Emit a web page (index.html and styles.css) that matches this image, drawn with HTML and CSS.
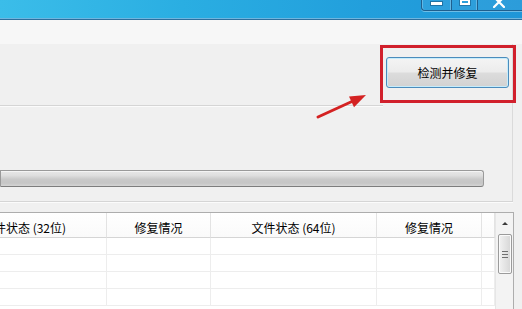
FILE: index.html
```html
<!DOCTYPE html>
<html lang="zh-CN">
<head>
<meta charset="utf-8">
<title>检测并修复</title>
<link rel="stylesheet" href="styles.css">
</head>
<body>
<div class="window">
  <div class="titlebar">
    <div class="caption-btns">
      <div class="cb cb-min"><span class="ico-min"></span></div>
      <div class="cb cb-max"><span class="ico-max"></span></div>
      <div class="cb cb-close">
        <svg class="ico-close" width="12" height="8" viewBox="0 0 12 8"><path d="M1 -3 L11 7 M11 -3 L1 7" stroke="#fff" stroke-width="2.2" stroke-linecap="square"/></svg>
      </div>
    </div>
  </div>
  <div class="toolbar"></div>
  <div class="content">
    <div class="upper">
      <div class="action-row">
        <button class="fix-btn">检测并修复</button>
      </div>
      <div class="rule rule-short"></div>
      <div class="progress-area">
        <div class="progress"></div>
      </div>
    </div>
    <div class="rule rule-long"></div>
    <div class="grid-wrap">
      <div class="grid">
        <div class="row head">
          <div class="cell">文件状态 (32位)</div>
          <div class="cell">修复情况</div>
          <div class="cell">文件状态 (64位)</div>
          <div class="cell">修复情况</div>
          <div class="cell"></div>
        </div>
        <div class="row"><div class="cell"></div><div class="cell"></div><div class="cell"></div><div class="cell"></div><div class="cell"></div></div>
        <div class="row"><div class="cell"></div><div class="cell"></div><div class="cell"></div><div class="cell"></div><div class="cell"></div></div>
        <div class="row"><div class="cell"></div><div class="cell"></div><div class="cell"></div><div class="cell"></div><div class="cell"></div></div>
        <div class="row"><div class="cell"></div><div class="cell"></div><div class="cell"></div><div class="cell"></div><div class="cell"></div></div>
      </div>
      <div class="vscroll">
        <div class="sb-up"><span class="tri"></span></div>
        <div class="sb-thumb"><span class="grip"></span><span class="grip"></span><span class="grip"></span></div>
      </div>
    </div>
  </div>

  <div class="highlight"></div>
  <svg class="arrow" width="522" height="309" viewBox="0 0 522 309">
    <line x1="318" y1="117" x2="353" y2="101" stroke="#d42222" stroke-width="3" stroke-linecap="round"/>
    <polygon points="366,95 349,96.4 354,107.2" fill="#d42222"/>
  </svg>
</div>
</body>
</html>
```
FILE: styles.css
```css
* { box-sizing: border-box; }
html, body { margin: 0; padding: 0; }
body {
  width: 522px;
  height: 309px;
  overflow: hidden;
  background: #f0f0f0;
  font-family: "Noto Sans CJK SC", "DejaVu Sans", sans-serif;
  font-size: 12px;
  color: #000;
}
.window {
  position: relative;
  width: 522px;
  height: 309px;
  overflow: hidden;
  display: flex;
  flex-direction: column;
}
.titlebar {
  height: 20px;
  flex: none;
  display: flex;
  background: linear-gradient(90deg, #3bbde9 0%, #2aaee2 35%, #229fdc 70%, #1f96d8 100%);
  border-bottom: 1px solid #2d6f9e;
  box-shadow: inset 0 -1px 0 #6fb6df;
}
.caption-btns {
  margin-left: auto;
  width: 101px;
  height: 11px;
  display: flex;
  border: 1px solid #1f5f8e;
  border-top: none;
  border-right: none;
  border-bottom-left-radius: 4px;
  box-shadow: 0 1px 0 rgba(255,255,255,0.35), inset 1px 0 0 rgba(255,255,255,0.25);
  background: rgba(255,255,255,0.06);
}
.cb {
  height: 10px;
  display: flex;
  align-items: flex-start;
  justify-content: center;
  border-right: 1px solid #1f5f8e;
  box-shadow: inset -1px 0 0 rgba(255,255,255,0.25);
}
.cb-min { width: 30px; }
.cb-max { width: 26px; }
.cb-close { flex: 1; border-right: none; box-shadow: none; }
.ico-min {
  margin-top: 2px;
  width: 11px;
  height: 3px;
  background: #fff;
  box-shadow: 0 0 0 1px rgba(20,70,110,0.5);
}
.ico-max {
  margin-top: -2px;
  width: 10px;
  height: 7px;
  border: 2px solid #fff;
  border-top-width: 3px;
  box-shadow: 0 0 0 1px rgba(20,70,110,0.45);
}
.ico-close { margin-top: 0; margin-right: 3px; }

.toolbar {
  height: 24px;
  flex: none;
  background: #f7f7f7;
}
.content {
  flex: 1;
  display: flex;
  flex-direction: column;
}
.upper {
  width: 513px;
  border-right: 1px solid #dadada;
}
.action-row {
  height: 61px;
  display: flex;
  justify-content: flex-end;
  align-items: flex-start;
  padding-top: 13px;
  padding-right: 3px;
}
.fix-btn {
  width: 123px;
  height: 31px;
  border: 1px solid #4b8cbc;
  border-radius: 3px;
  background: linear-gradient(#f4f4f4 0%, #ececec 48%, #dcdcdc 52%, #d2d2d2 100%);
  box-shadow: inset 0 0 0 1px #c6ecfb;
  font-family: "Noto Sans CJK SC", sans-serif;
  font-size: 12px;
  color: #000;
  padding: 0;
  line-height: 29px;
}
.rule {
  height: 2px;
  border-top: 1px solid #d5d5d5;
  border-bottom: 1px solid #fbfbfb;
}
.rule-short { width: 383px; }
.rule-long { width: 513px; }
.progress-area {
  height: 94px;
  padding-top: 63px;
}
.progress {
  width: 484px;
  height: 17px;
  border: 1px solid #9a9a9a;
  border-bottom-color: #7d7d7d;
  border-radius: 0 3px 3px 0;
  background: linear-gradient(#e8e8e8 0%, #dedede 30%, #c9c9c9 55%, #c6c6c6 80%, #d4d4d4 100%);
  box-shadow: inset 0 1px 0 #f4f4f4;
}
.grid-wrap {
  margin-top: 9px;
  margin-left: -59px;
  width: 573px;
  flex: 1;
  display: flex;
  border: 1px solid #adadad;
  border-bottom: none;
  background: #fff;
}
.grid {
  flex: none;
  width: 553px;
}
.row {
  display: grid;
  grid-template-columns: 165px 104px 166px 105px 13px;
  height: 17px;
}
.row .cell {
  border-right: 1px solid #ededed;
  border-bottom: 1px solid #ededed;
}
.row.head {
  height: 25px;
}
.row.head .cell {
  border-right: 1px solid #e3e3e3;
  border-bottom: 1px solid #d5d5d5;
  background: linear-gradient(#ffffff, #fafafa);
  display: flex;
  align-items: center;
  justify-content: center;
  padding-top: 4px;
  white-space: nowrap;
}
.vscroll {
  width: 18px;
  background: #f3f3f3;
  border-left: 1px solid #e6e6e6;
  display: flex;
  flex-direction: column;
  align-items: center;
}
.sb-up {
  height: 19px;
  width: 100%;
  display: flex;
  justify-content: center;
  align-items: flex-end;
  padding-bottom: 7px;
}
.tri {
  width: 0;
  height: 0;
  border-left: 3px solid transparent;
  border-right: 3px solid transparent;
  border-bottom: 3px solid #3a3a3a;
}
.sb-thumb {
  margin-top: 2px;
  width: 14px;
  height: 40px;
  border: 1px solid #9b9b9b;
  border-radius: 2px;
  background: linear-gradient(90deg, #f2f2f2, #e4e4e4 50%, #d6d6d6);
  box-shadow: inset 0 0 0 1px #fafafa;
  display: flex;
  flex-direction: column;
  align-items: center;
  justify-content: center;
  gap: 2px;
}
.grip {
  width: 6px;
  height: 1px;
  background: #6f6f6f;
}

.highlight {
  position: absolute;
  left: 380px;
  top: 45px;
  width: 136px;
  height: 58px;
  border: 3px solid #d1202c;
}
.arrow {
  position: absolute;
  left: 0;
  top: 0;
  pointer-events: none;
}
```
